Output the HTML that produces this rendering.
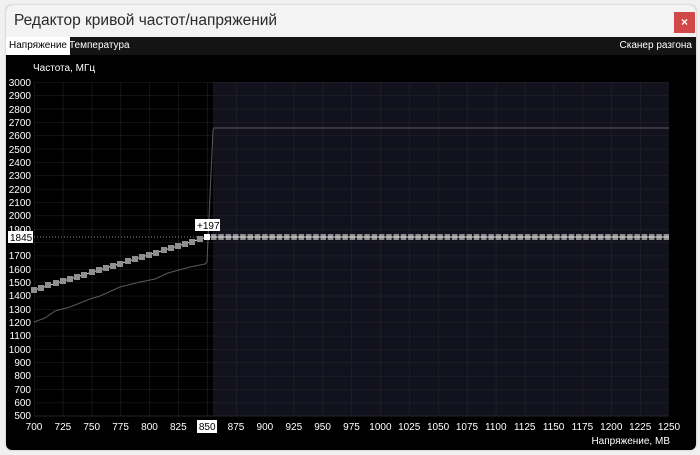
<!DOCTYPE html>
<html><head><meta charset="utf-8"><style>
html,body{margin:0;padding:0;width:700px;height:455px;background:#f0f0f0;overflow:hidden;font-family:"Liberation Sans","DejaVu Sans",sans-serif}
.win{position:absolute;left:6px;top:5px;width:690px;height:445px;background:#000;border-radius:6px;overflow:hidden;box-shadow:0 0 2px #bbb}
.title{position:absolute;left:0;top:0;width:690px;height:32px;background:#f3f3f3;color:#2a2a2a;font-size:15.5px;line-height:32px;padding-left:8px;box-sizing:border-box}
.close{position:absolute;right:1px;top:7px;width:21px;height:21px;background:#d04848;color:#fff;font-size:12px;text-align:center;line-height:21px;font-weight:bold}
.tabs{position:absolute;left:0;top:32px;width:690px;height:18px;background:#141414;font-size:10px;line-height:18px;color:#fff}
.tab1{position:absolute;left:0;top:0;background:#fff;color:#000;padding:0 3px;height:18px}
.tab2{position:absolute;left:61px;top:0;padding:0 2px}
.tab3{position:absolute;right:4px;top:0}
svg{position:absolute;left:0;top:0}
</style></head><body>
<div class="win">
<div class="title">Редактор кривой частот/напряжений<div class="close">×</div></div>
<div class="tabs"><span class="tab1">Напряжение</span><span class="tab2">Температура</span><span class="tab3">Сканер разгона</span></div>
</div>
<svg width="700" height="455" viewBox="0 0 700 455" font-family="Liberation Sans, sans-serif">
<defs>
<pattern id="g" x="34" y="82" width="28.864" height="13.36" patternUnits="userSpaceOnUse">
<path d="M0 0H28.864M0 0V13.36" stroke="#262626" stroke-width="1" fill="none"/>
</pattern>
</defs>
<text x="33" y="71" fill="#fff" font-size="10">Частота, МГц</text>
<rect x="213" y="82" width="456" height="334" fill="#12121f"/>
<rect x="34" y="82" width="635" height="334" fill="url(#g)"/>
<line x1="34" y1="416" x2="669" y2="416" stroke="#262626"/>
<g fill="#fff" font-size="10" text-anchor="end">
<text x="31" y="86">3000</text><text x="31" y="99">2900</text><text x="31" y="113">2800</text><text x="31" y="126">2700</text><text x="31" y="139">2600</text><text x="31" y="153">2500</text><text x="31" y="166">2400</text><text x="31" y="179">2300</text><text x="31" y="193">2200</text><text x="31" y="206">2100</text><text x="31" y="219">2000</text><text x="31" y="233">1900</text><text x="31" y="259">1700</text><text x="31" y="273">1600</text><text x="31" y="286">1500</text><text x="31" y="299">1400</text><text x="31" y="313">1300</text><text x="31" y="326">1200</text><text x="31" y="339">1100</text><text x="31" y="353">1000</text><text x="31" y="366">900</text><text x="31" y="379">800</text><text x="31" y="393">700</text><text x="31" y="406">600</text><text x="31" y="419">500</text>
</g>
<polyline points="34,322 45,318 55,311 70,307 90,299 100,296 120,287 140,282 155,279 168,273 190,267 205,264 207,262 213,130 214,128 669,128" fill="none" stroke="#5a5a5a" stroke-width="1"/>
<line x1="34" y1="237" x2="207" y2="237" stroke="#888" stroke-dasharray="1 2"/>
<polyline points="34,290 207,237 669,237" fill="none" stroke="#ddd" stroke-width="1"/>
<g fill="#8f8f8f">
<rect x="31" y="287" width="6" height="6"/><rect x="38" y="285" width="6" height="6"/><rect x="45" y="282" width="6" height="6"/><rect x="53" y="280" width="6" height="6"/><rect x="60" y="278" width="6" height="6"/><rect x="67" y="276" width="6" height="6"/><rect x="74" y="274" width="6" height="6"/><rect x="81" y="272" width="6" height="6"/><rect x="89" y="269" width="6" height="6"/><rect x="96" y="267" width="6" height="6"/><rect x="103" y="265" width="6" height="6"/><rect x="110" y="263" width="6" height="6"/><rect x="117" y="261" width="6" height="6"/><rect x="125" y="258" width="6" height="6"/><rect x="132" y="256" width="6" height="6"/><rect x="139" y="254" width="6" height="6"/><rect x="146" y="252" width="6" height="6"/><rect x="153" y="250" width="6" height="6"/><rect x="161" y="247" width="6" height="6"/><rect x="168" y="245" width="6" height="6"/><rect x="175" y="243" width="6" height="6"/><rect x="182" y="241" width="6" height="6"/><rect x="189" y="239" width="6" height="6"/><rect x="197" y="236" width="6" height="6"/>
</g>
<line x1="211" y1="237" x2="669" y2="237" stroke="#8f8f8f" stroke-width="6" stroke-dasharray="5.5 1.8"/>
<line x1="212" y1="237" x2="669" y2="237" stroke="#ddd" stroke-width="1"/>
<rect x="204" y="234" width="6" height="6" fill="#fff"/>
<rect x="8" y="231" width="25" height="12" fill="#fff"/>
<text x="10" y="241" fill="#000" font-size="10">1845</text>
<rect x="195" y="219" width="25" height="12" fill="#fff"/>
<text x="197" y="229" fill="#000" font-size="10">+197</text>
<g fill="#fff" font-size="10" text-anchor="middle">
<text x="34" y="430">700</text><text x="62.9" y="430">725</text><text x="91.7" y="430">750</text><text x="120.6" y="430">775</text><text x="149.5" y="430">800</text><text x="178.3" y="430">825</text>
<rect x="197" y="420" width="20" height="13" fill="#fff"/><text x="207.2" y="430" fill="#000">850</text>
<text x="236" y="430">875</text><text x="264.9" y="430">900</text><text x="293.8" y="430">925</text><text x="322.6" y="430">950</text><text x="351.5" y="430">975</text><text x="380.4" y="430">1000</text><text x="409.2" y="430">1025</text><text x="438.1" y="430">1050</text><text x="467" y="430">1075</text><text x="495.8" y="430">1100</text><text x="524.7" y="430">1125</text><text x="553.6" y="430">1150</text><text x="582.4" y="430">1175</text><text x="611.3" y="430">1200</text><text x="640.2" y="430">1225</text><text x="669" y="430">1250</text>
</g>
<text x="670" y="444" fill="#fff" font-size="10" text-anchor="end">Напряжение, МВ</text>
</svg>
</body></html>
